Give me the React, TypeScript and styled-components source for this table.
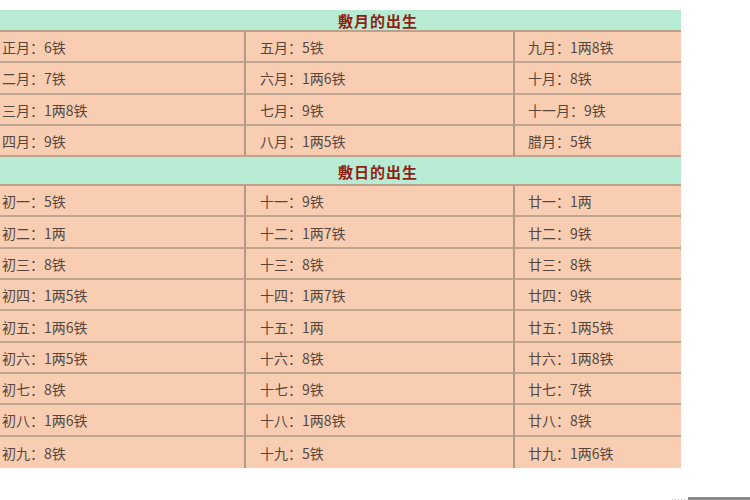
import React from "react";
import styled, { createGlobalStyle } from "styled-components";

const Global = createGlobalStyle`
  html, body { margin: 0; padding: 0; background: #ffffff; overflow: hidden; }
  body { font-family: "Noto Sans CJK SC", "Noto Sans", sans-serif; }
`;

const Page = styled.div`
  width: 750px;
  height: 500px;
  padding-top: 10px;
  box-sizing: border-box;
  display: flex;
  flex-direction: column;
`;

const Table = styled.div`
  width: 681px;
  display: grid;
  grid-template-columns: 246px 269px 166px;
  background: #f9cdb1;
`;

const Header = styled.div<{ $h: number; $pt: number }>`
  grid-column: 1 / -1;
  height: ${(p) => p.$h}px;
  box-sizing: border-box;
  background: #b7ebd3;
  border-bottom: 2px solid #b9a18d;
  display: flex;
  align-items: center;
  padding: ${(p) => p.$pt}px 0 0 338px;
  font-size: 15px;
  font-weight: 700;
  color: #8e1f14;
  letter-spacing: 1px;
`;

const Cell = styled.div<{ $pad: number; $divider: boolean }>`
  height: 31.3px;
  box-sizing: border-box;
  border-bottom: 2px solid #bea591;
  border-right: ${(p) => (p.$divider ? "2px solid #b39a86" : "none")};
  display: flex;
  align-items: center;
  padding: 1px 0 0 ${(p) => p.$pad}px;
  font-size: 14px;
  color: #56473e;
  white-space: nowrap;
`;

const LastCell = styled(Cell)`
  border-bottom: none;
`;

const Footer = styled.div`
  margin-top: 29px;
  display: flex;
  justify-content: flex-end;
  align-items: center;
  gap: 2px;
`;

const Dots = styled.div`
  width: 14px;
  height: 3px;
  background: repeating-linear-gradient(90deg, #bbb 0 1px, transparent 1px 3px);
`;

const GrayBar = styled.div`
  width: 62px;
  height: 8px;
  background: #8a8a8a;
`;

const months: string[][] = [
  ["正月：6铁", "五月：5铁", "九月：1两8铁"],
  ["二月：7铁", "六月：1两6铁", "十月：8铁"],
  ["三月：1两8铁", "七月：9铁", "十一月：9铁"],
  ["四月：9铁", "八月：1两5铁", "腊月：5铁"],
];

const days: string[][] = [
  ["初一：5铁", "十一：9铁", "廿一：1两"],
  ["初二：1两", "十二：1两7铁", "廿二：9铁"],
  ["初三：8铁", "十三：8铁", "廿三：8铁"],
  ["初四：1两5铁", "十四：1两7铁", "廿四：9铁"],
  ["初五：1两6铁", "十五：1两", "廿五：1两5铁"],
  ["初六：1两5铁", "十六：8铁", "廿六：1两8铁"],
  ["初七：8铁", "十七：9铁", "廿七：7铁"],
  ["初八：1两6铁", "十八：1两8铁", "廿八：8铁"],
  ["初九：8铁", "十九：5铁", "廿九：1两6铁"],
];

const pads = [2, 14, 13];

function Rows({ data, last }: { data: string[][]; last?: boolean }) {
  return (
    <>
      {data.map((row, r) =>
        row.map((txt, c) => {
          const C = last && r === data.length - 1 ? LastCell : Cell;
          return (
            <C key={`${r}-${c}`} $pad={pads[c]} $divider={c < 2}>
              {txt}
            </C>
          );
        })
      )}
    </>
  );
}

export default function App() {
  return (
    <Page>
      <Global />
      <Table>
        <Header $h={22} $pt={0}>敷月的出生</Header>
        <Rows data={months} />
        <Header $h={29} $pt={2}>敷日的出生</Header>
        <Rows data={days} last />
      </Table>
      <Footer>
        <Dots />
        <GrayBar />
      </Footer>
    </Page>
  );
}
